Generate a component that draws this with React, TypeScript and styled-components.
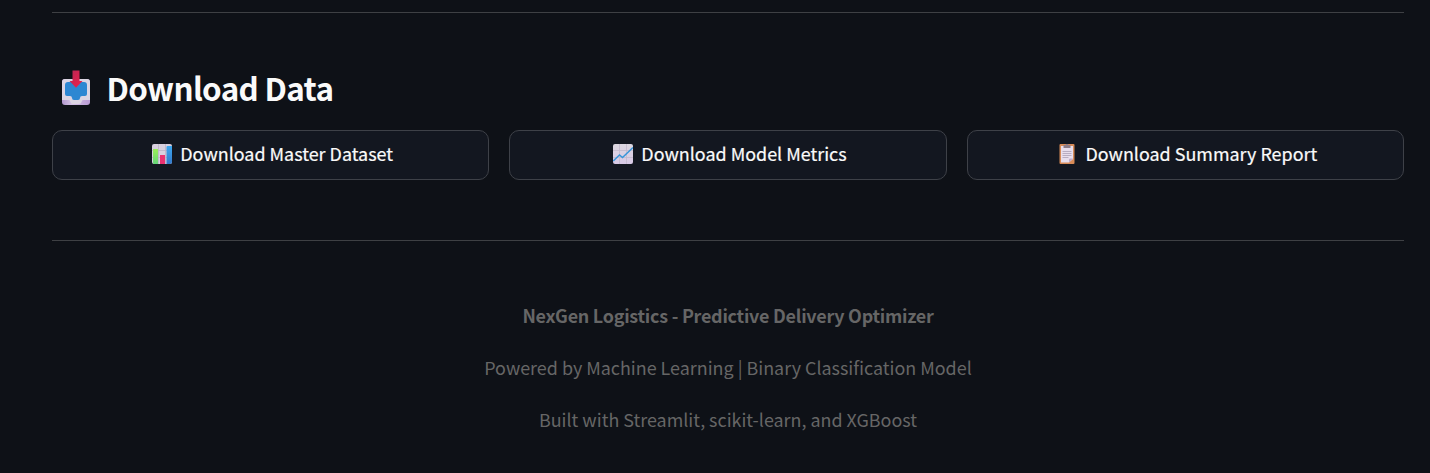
import React from "react";
import styled, { createGlobalStyle } from "styled-components";

const GlobalStyle = createGlobalStyle`
  * { box-sizing: border-box; }
  body {
    margin: 0;
    background: #0e1117;
    color: #fafafa;
    font-family: "Source Sans Pro", "Noto Sans CJK SC", sans-serif;
    overflow: hidden;
  }
`;

const Page = styled.main`
  display: flex;
  flex-direction: column;
  height: 473px;
  padding: 12px 26px 0 52px;
`;

const Divider = styled.hr`
  flex: none;
  width: 100%;
  height: 1px;
  margin: 0;
  border: 0;
  background: #3e4044;
`;

const Heading = styled.h2`
  display: flex;
  align-items: center;
  gap: 16.5px;
  height: 44px;
  margin: 53px 0 20px;
  padding-left: 10px;
  font-size: 31.4px;
  line-height: 44px;
  font-weight: 700;
  letter-spacing: -0.66px;
  white-space: nowrap;
`;

const ButtonRow = styled.div`
  display: grid;
  grid-template-columns: repeat(3, 1fr);
  gap: 20px;
  margin-bottom: 60px;
`;

const DownloadButton = styled.button`
  display: flex;
  align-items: center;
  justify-content: center;
  gap: 8px;
  height: 50px;
  padding: 0 0 2px 4px;
  border: 1px solid #3e4148;
  border-radius: 10px;
  background: #131720;
  color: #fafafa;
  font: 400 17.93px/28px "Source Sans Pro", "Noto Sans CJK SC", sans-serif;
  -webkit-text-stroke: 0.2px currentColor;
  white-space: nowrap;
`;

const ButtonLabel = styled.span`
  height: 30px;
`;

const Footer = styled.footer`
  display: flex;
  flex-direction: column;
  align-items: center;
  gap: 22px;
  padding-top: 59px;
  color: #666;
  font-size: 17.92px;
  line-height: 30px;
`;

const FooterLine = styled.p<{ $bold?: boolean }>`
  margin: 0;
  font-weight: ${({ $bold }) => ($bold ? 700 : 400)};
  letter-spacing: ${({ $bold }) => ($bold ? "-0.24px" : "0")};
  white-space: nowrap;
`;

const InboxIcon = () => (
  <svg width="28" height="36" viewBox="0 0 28 36">
    <defs>
      <linearGradient id="arrow" x2="1" y2="1">
        <stop stopColor="#b92653" />
        <stop offset="1" stopColor="#f0204d" />
      </linearGradient>
      <linearGradient id="tray" x2="1">
        <stop stopColor="#b297ce" />
        <stop offset=".35" stopColor="#d3c2e4" />
        <stop offset="1" stopColor="#b99bd4" />
      </linearGradient>
    </defs>
    <rect y="9" width="28" height="26" rx="3" fill="url(#tray)" />
    <path d="M3 9H25Q28 9 28 12V30H21Q20 30 19.5 32T17 34H11Q9 34 8.5 32T7 30H0V12Q0 9 3 9Z" fill="#dcd5e3" />
    <path d="M6 12H22Q25 12 25 15V24Q25 26 23 26H20Q18 26 18 28T16 30H12Q10 30 10 28T8 26H5Q3 26 3 24V15Q3 12 6 12Z" fill="#2d87d2" />
    <path d="M10.5 .5H17.5V11H20.5L14 17.8L7.5 11H10.5Z" fill="url(#arrow)" />
  </svg>
);

const BarChartIcon = () => (
  <svg width="20" height="20" viewBox="0 0 20 20">
    <defs>
      <linearGradient id="green" x2="0" y2="1">
        <stop stopColor="#9bed58" />
        <stop offset="1" stopColor="#65d579" />
      </linearGradient>
      <linearGradient id="blue" x2="0" y2="1">
        <stop stopColor="#3ca7ef" />
        <stop offset="1" stopColor="#3479cb" />
      </linearGradient>
    </defs>
    <rect width="20" height="20" rx="2" fill="#d8d0df" />
    <path d="M0 6.5H20M0 13.5H20M6.5 0V20M13.5 0V20" stroke="#bdb3c6" strokeWidth=".8" />
    <path d="M2 5H6V20H2Q1 20 1 19V5Z" fill="url(#green)" />
    <path d="M8 11H13V20H8Z" fill="#eb3271" />
    <path d="M14.5 3Q14.5 2 15.5 2H20V18Q20 20 18 20H14.5Z" fill="url(#blue)" />
  </svg>
);

const LineChartIcon = () => (
  <svg width="20" height="20" viewBox="0 0 20 20">
    <defs>
      <linearGradient id="paper" x2="0" y2="1">
        <stop stopColor="#dcd7e0" />
        <stop offset="1" stopColor="#d8c9e6" />
      </linearGradient>
    </defs>
    <rect width="20" height="20" rx="2" fill="url(#paper)" />
    <path d="M0 6.5H20M0 13.5H20M6.5 0V20M13.5 0V20" stroke="#c3b9cc" strokeWidth=".8" />
    <path d="M.3 17L6.5 11L9.5 13.5L20 3.5" fill="none" stroke="#3795d9" strokeWidth="1.5" />
  </svg>
);

const ClipboardIcon = () => (
  <svg width="20" height="20" viewBox="-2.5 0 20 20">
    <rect width="15" height="20" rx="1" fill="#d88b57" />
    <path d="M1.5 2H13.5V15L9.5 18.5H1.5Z" fill="#e8deed" />
    <path d="M13.5 14.5H10.5Q9.5 14.5 9.5 16V18.5Z" fill="#bda9c9" />
    <path d="M4 1H6Q6 0 7.5 0T9 1H11V4H4Z" fill="#8d7c87" />
    <path d="M3 7.5H12M3 9.5H12M3 11.5H12M3 13.5H9" stroke="#b3a7bd" strokeWidth=".9" />
  </svg>
);

export default function App() {
  return (
    <>
      <GlobalStyle />
      <Page>
        <Divider />
        <Heading>
          <InboxIcon />
          Download Data
        </Heading>
        <ButtonRow>
          <DownloadButton>
            <BarChartIcon />
            <ButtonLabel>Download Master Dataset</ButtonLabel>
          </DownloadButton>
          <DownloadButton>
            <LineChartIcon />
            <ButtonLabel>Download Model Metrics</ButtonLabel>
          </DownloadButton>
          <DownloadButton>
            <ClipboardIcon />
            <ButtonLabel>Download Summary Report</ButtonLabel>
          </DownloadButton>
        </ButtonRow>
        <Divider />
        <Footer>
          <FooterLine $bold>NexGen Logistics - Predictive Delivery Optimizer</FooterLine>
          <FooterLine>Powered by Machine Learning | Binary Classification Model</FooterLine>
          <FooterLine>Built with Streamlit, scikit-learn, and XGBoost</FooterLine>
        </Footer>
      </Page>
    </>
  );
}
